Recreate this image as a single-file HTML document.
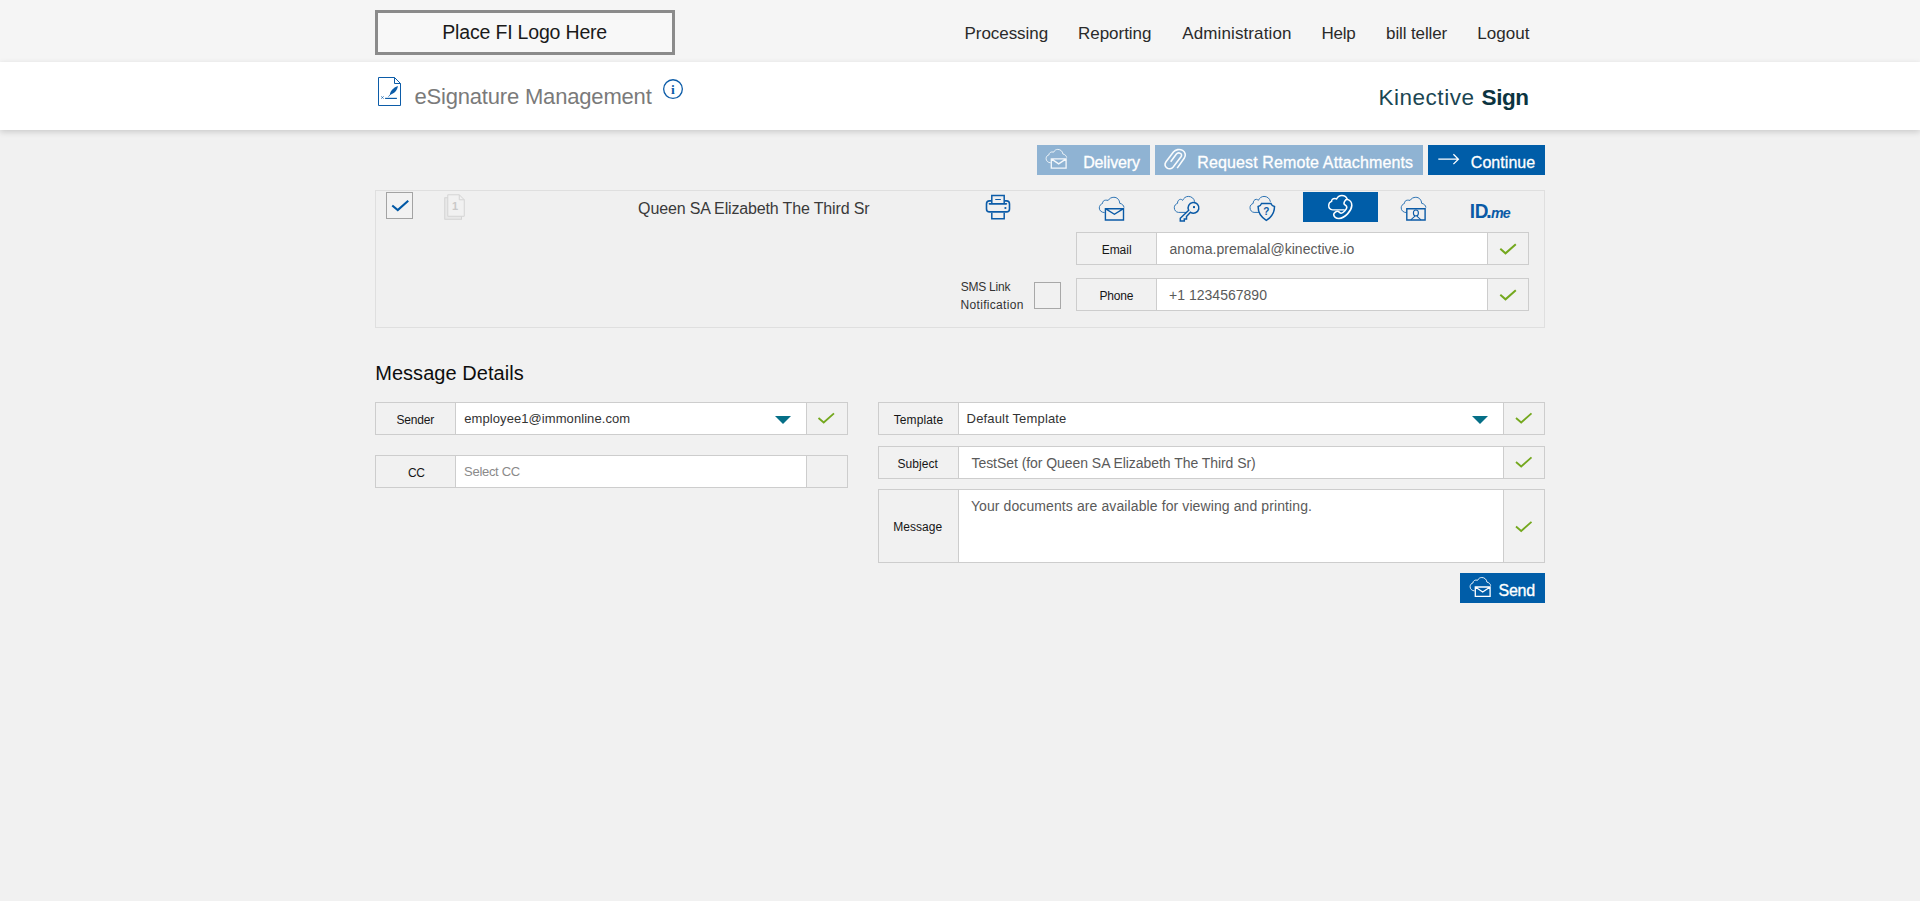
<!DOCTYPE html>
<html lang="en">
<head>
<meta charset="utf-8">
<title>eSignature Management</title>
<style>
html,body{margin:0;padding:0}
body{width:1920px;height:901px;overflow:hidden;background:#f1f1f1;position:relative;font-family:"Liberation Sans",sans-serif}
.abs{position:absolute;box-sizing:border-box}
.t{position:absolute;white-space:pre;font-family:"Liberation Sans",sans-serif}
#topbar{left:0;top:0;width:1920px;height:62px;background:#f5f5f5}
#logobox{left:375px;top:10px;width:300px;height:45px;border:3px solid #8b8b8b;background:#f8f8f8}
#band{left:0;top:62px;width:1920px;height:68px;background:#fff;box-shadow:0 2px 6px rgba(0,0,0,.16)}
.btn{height:30px;top:145px}
.row{border:1px solid #cdcdcd;background:#fff}
.lab{top:0;left:0;bottom:0;background:#f1f1f1;border-right:1px solid #cdcdcd}
.chk{top:0;right:0;bottom:0;background:#f1f1f1;border-left:1px solid #cdcdcd}
#panel{left:375px;top:190px;width:1170px;height:138px;border:1px solid #dfdfdf;background:#f0f0f0}
svg{position:absolute;left:0;top:0;overflow:visible}
</style>
</head>
<body>
<div class="abs" id="topbar"></div>
<div class="abs" id="logobox"></div>
<div class="abs" id="band"></div>

<!-- action buttons -->
<div class="abs btn" style="left:1037px;width:113px;background:#8fb3d3"></div>
<div class="abs btn" style="left:1155px;width:268px;background:#8fb3d3"></div>
<div class="abs btn" style="left:1428px;width:117px;background:#005da8"></div>

<!-- signer panel -->
<div class="abs" id="panel"></div>
<div class="abs" style="left:386px;top:192px;width:27px;height:27px;border:1px solid #a3a3a3;background:#f2f2f2"></div>
<div class="abs" style="left:1303px;top:192px;width:75px;height:30px;background:#005da8"></div>
<div class="abs" style="left:1034px;top:282px;width:27px;height:27px;border:1px solid #a8a8a8;background:#f1f1f1"></div>

<div class="abs row" style="left:1076px;top:232px;width:453px;height:33px"><div class="abs lab" style="width:80px"></div><div class="abs chk" style="width:41px"></div></div>
<div class="abs row" style="left:1076px;top:278px;width:453px;height:33px"><div class="abs lab" style="width:80px"></div><div class="abs chk" style="width:41px"></div></div>

<!-- message details -->
<div class="abs row" style="left:375px;top:402px;width:473px;height:33px"><div class="abs lab" style="width:80px"></div><div class="abs chk" style="width:41px"></div></div>
<div class="abs row" style="left:375px;top:455px;width:473px;height:33px"><div class="abs lab" style="width:80px"></div><div class="abs chk" style="width:41px"></div></div>
<div class="abs row" style="left:878px;top:402px;width:667px;height:33px"><div class="abs lab" style="width:80px"></div><div class="abs chk" style="width:41px"></div></div>
<div class="abs row" style="left:878px;top:446px;width:667px;height:33px"><div class="abs lab" style="width:80px"></div><div class="abs chk" style="width:41px"></div></div>
<div class="abs row" style="left:878px;top:489px;width:667px;height:74px"><div class="abs lab" style="width:80px"></div><div class="abs chk" style="width:41px"></div></div>

<div class="abs" style="left:1460px;top:573px;width:85px;height:30px;background:#005da8"></div>

<svg width="1920" height="901" viewBox="0 0 1920 901" fill="none" stroke-linejoin="miter">
<defs>
<g id="mailS">
<path d="M4.6 13.65 C1.8 13.45 .1 11.65 .1 9.45 C.1 7.45 1.4 6.05 3 5.65 C2.8 3.85 5.2 2.05 7.6 3.05 C8.4 1.25 10 .25 11.8 .25 C14.4 .25 16.6 2.05 16.9 4.85 C18.8 5.25 20.3 6.45 20.7 8.45" stroke-width=".9"/>
<path d="M5.3 9.75 H20.1 V19.05 H5.3 Z M5.3 9.75 L12.7 14.75 L20.1 9.75" stroke-width="1.3"/>
</g>
<path id="cloudA" d="M1104.6 212.6 C1101.4 212.4 1099.3 210.6 1099.3 207.9 C1099.3 205.8 1100.6 204.2 1102.5 203.5 C1102.6 201.6 1103.6 200.3 1105.4 200.2 C1106.4 200.1 1107.4 200.2 1108.2 200.4 C1109.4 198.4 1111.4 197.3 1113.9 197.3 C1117 197.3 1119.6 199.6 1119.7 203.3 C1122.2 203.8 1123.8 205.4 1124 207.6"/>
<path id="cloudB" d="M1186 212.4 H1178.4 C1176 212.2 1174.3 210.2 1174.3 207.7 C1174.3 205.6 1175.6 204 1177.5 203.4 C1177.4 201.2 1178.6 199.5 1180.6 199.3 C1181.4 199.3 1182 199.7 1182.6 200.4 C1183.8 198 1185.8 196.4 1188.3 196.4 C1191.6 196.4 1194.2 198.6 1194.7 201.8"/>
<path id="gchk" d="M13 16.05 L18.2 20.5 L28.5 11.4"/>
</defs>

<!-- title doc/sign icon -->
<g stroke="#0c5ca8" stroke-width="1">
<path d="M394.5 77.5 H378.5 V105.5 H400.5 V83.5 Z"/>
<path d="M394.5 77.5 V83.5 H400.5"/>
<path d="M385.1 98.4 H396.9" stroke-width="1.2"/>
<path d="M381.2 96.3 L383.7 98.7 M383.7 96.3 L381.2 98.7" stroke-width=".7"/>
<path d="M388.4 96.7 L391.6 93.2" stroke-width=".7"/>
<path d="M389.9 94.7 C390 91.6 393 87.8 397.9 86.1 C397.2 90.8 394.2 93.8 389.9 94.7 Z" fill="#0c5ca8" stroke="none"/>
</g>
<!-- info icon -->
<circle cx="673" cy="89.1" r="9.35" stroke="#0c5ca8" stroke-width="1.3"/>
<text x="673" y="94" text-anchor="middle" font-family="'Liberation Serif',serif" font-weight="bold" font-size="13.5" fill="#0c5ca8" stroke="none">i</text>

<!-- delivery / send icons -->
<use href="#mailS" transform="translate(1046 149.15)" stroke="#f4f8fb"/>
<use href="#mailS" transform="translate(1470 577.25)" stroke="#fff"/>
<!-- clip -->
<path d="M1177.2 168.1 L1184.2 158.3 C1186.2 155.4 1185.4 152 1182.6 150.4 C1179.6 148.8 1175.6 149.4 1173.4 152 L1166 161.8 C1164.4 164 1164.8 166.6 1166.8 167.8 C1168.8 169.2 1171.6 168.8 1173 167.2 L1181 156.8 C1182 155.4 1181.6 154 1180.4 153.4 C1179 152.6 1177.2 153 1176.2 154.2 L1170.7 161.75" stroke="#fafcfd" stroke-width="1.6"/>
<!-- arrow -->
<path d="M1438.3 159.2 H1458.2 M1453.4 154.3 L1458.4 159.2 L1453.4 164.1" stroke="#fff" stroke-width="1.3"/>

<!-- checkbox check -->
<path d="M392.25 205.5 L397.75 210 L408.25 200.75" stroke="#0058a5" stroke-width="2.1"/>
<!-- docs icon -->
<rect x="444.75" y="197.75" width="16.75" height="21.5" fill="#e8e8e8" stroke="#d4d4d4"/>
<path d="M447.75 194.75 H459.25 L464.25 199.75 V216.25 H447.75 Z" fill="#f1f1f1" stroke="#d4d4d4"/>
<path d="M459.25 194.75 V199.75 H464.25" stroke="#d4d4d4"/>
<text x="455" y="209.75" text-anchor="middle" font-family="'Liberation Sans',sans-serif" font-weight="bold" font-size="11" fill="#c9c9c9">1</text>

<!-- printer -->
<g stroke="#0c5ca8" stroke-width="1.6">
<path d="M991.8 200.9 H989.5 a3 3 0 0 0 -3 3 V208.9 a3 3 0 0 0 3 3 H1006.5 a3 3 0 0 0 3 -3 V203.9 a3 3 0 0 0 -3 -3 H1004.2"/>
<path d="M991.8 203.8 V195.4 H1004.2 V203.8" stroke-width="1.5"/>
<path d="M989.4 203.85 H1006.4" stroke-linecap="round"/>
<path d="M995.7 199.5 H1000.4" stroke-width="1.2" stroke-linecap="round"/>
<path d="M991.8 212.7 V218.7 H1004.2 V212.7" stroke-width="1.5"/>
<circle cx="1005.4" cy="208" r="1.1" fill="#0c5ca8" stroke="none"/>
</g>

<!-- cloud mail -->
<use href="#cloudA" stroke="#2e74b4" stroke-width="1"/>
<path d="M1105.4 208.7 H1123.5 V220 H1105.4 Z M1105.4 208.7 L1114.4 214.3 L1123.5 208.7" stroke="#0a5aa6" stroke-width="1.4"/>
<!-- cloud key -->
<use href="#cloudB" stroke="#2e74b4" stroke-width="1"/>
<path d="M1188.7 210.3 L1180.3 218.3 V221 H1184.3 V219 H1186.5 V216.6 L1190.5 212.3 A5.4 5.4 0 1 0 1188.7 210.3 Z" stroke="#0a5aa6" stroke-width="1.5"/>
<rect x="1193" y="206.1" width="2" height="2" fill="#0a5aa6"/>
<!-- cloud shield -->
<use href="#cloudB" transform="translate(75.7 0)" stroke="#2e74b4" stroke-width="1"/>
<path d="M1261.6 203.4 H1270.9 C1271.4 205 1272.6 206.2 1274.5 206.6 C1274.5 213 1271 217.6 1266.3 220.4 C1261.6 217.6 1258.1 213 1258.1 206.6 C1260 206.2 1261.1 205 1261.6 203.4 Z" fill="#f0f0f0" stroke="#0a5aa6" stroke-width="1.5"/>
<text x="1266.4" y="215.1" text-anchor="middle" font-family="'Liberation Sans',sans-serif" font-weight="bold" font-size="10" fill="#0a5aa6">?</text>
<!-- cloud phone (selected) -->
<path d="M1344.7 209.9 H1332.5 C1330.2 209.7 1328.7 207.8 1328.7 205.6 C1328.7 203.6 1329.9 202 1331.6 201.4 C1331.5 199.8 1332.8 198.5 1334.8 198.5 C1335.5 198.5 1336.1 198.7 1336.6 199 C1337.6 196.8 1339.6 195.5 1341.9 195.5 C1344.4 195.5 1346.4 196.8 1347.2 198.9" stroke="#fff" stroke-width="1.4"/>
<path d="M1347 199.3 C1349.9 199.9 1351.9 202.6 1351.8 205.5 C1351.5 211 1345 218 1339 218.5 C1336 218.6 1333.6 216.5 1333.7 214.5 C1333.8 213 1336 211.2 1337.6 211.2 C1338.8 211.2 1339.8 213.2 1341.2 213.2 C1343 213.2 1346.8 209.5 1346.8 207.2 C1346.8 205.5 1344 205 1344 203.4 C1344 201.8 1345.5 199.6 1347 199.3 Z" stroke="#fff" stroke-width="1.6"/>
<!-- cloud person -->
<use href="#cloudA" transform="translate(301.9 0)" stroke="#2e74b4" stroke-width="1"/>
<path d="M1406.8 208.7 H1425.1 V220 H1406.8 Z" stroke="#0a5aa6" stroke-width="1.4"/>
<ellipse cx="1415.9" cy="213" rx="2.5" ry="3" stroke="#0a5aa6" stroke-width="1.1"/>
<path d="M1410.9 220 C1412.2 218 1414.4 217.4 1414.9 215.6 M1420.9 220 C1419.6 218 1417.4 217.4 1416.9 215.6" stroke="#0a5aa6" stroke-width="1.1"/>

<!-- green checks -->
<g stroke="#74a81e" stroke-width="1.8">
<use href="#gchk" transform="translate(1487.3 232.8)" stroke-width="2"/>
<use href="#gchk" transform="translate(1487.3 278.8)" stroke-width="2"/>
<use href="#gchk" transform="translate(805.5 402)"/>
<use href="#gchk" transform="translate(1503 402)"/>
<use href="#gchk" transform="translate(1503 446)"/>
<use href="#gchk" transform="translate(1503 510.5)"/>
</g>
<!-- carets -->
<path d="M775 416 H791 L783 424 Z M1472 416 H1488 L1480 424 Z" fill="#056f87"/>
</svg>
<span class="t" id="idI" style="left:1469.8px;top:201.6px;font-size:19px;line-height:19px;font-weight:bold;color:#0a5aa6;letter-spacing:-.4px;transform:scaleY(1.08);transform-origin:0 16px">ID</span>
<span class="t" id="idDot" style="left:1485.9px;top:199.6px;font-size:21px;line-height:21px;font-weight:bold;color:#0a5aa6">.</span>
<span class="t" id="idMe" style="left:1491.1px;top:204.7px;font-size:15.5px;line-height:15.5px;font-weight:bold;font-style:italic;color:#0a5aa6;letter-spacing:-.9px;transform:scaleX(.92);transform-origin:0 13px">me</span>


<span class="t" id="n1" style="left:964.5px;top:24.9px;font-size:17px;line-height:17px;letter-spacing:-0.056px;color:#2a2a2a">Processing</span>
<span class="t" id="n2" style="left:1078.1px;top:24.9px;font-size:17px;line-height:17px;letter-spacing:-0.054px;color:#2a2a2a">Reporting</span>
<span class="t" id="n3" style="left:1182.3px;top:24.9px;font-size:17px;line-height:17px;letter-spacing:0.108px;color:#2a2a2a">Administration</span>
<span class="t" id="n4" style="left:1321.4px;top:24.9px;font-size:17px;line-height:17px;letter-spacing:-0.230px;color:#2a2a2a">Help</span>
<span class="t" id="n5" style="left:1386.1px;top:24.9px;font-size:17px;line-height:17px;letter-spacing:-0.119px;color:#2a2a2a">bill teller</span>
<span class="t" id="n6" style="left:1477.3px;top:24.9px;font-size:17px;line-height:17px;letter-spacing:0.034px;color:#2a2a2a">Logout</span>
<span class="t" id="logo" style="left:442.3px;top:22.7px;font-size:19.5px;line-height:19.5px;letter-spacing:-0.182px;color:#1a1a1a">Place FI Logo Here</span>
<span class="t" id="title" style="left:414.4px;top:85.7px;font-size:22px;line-height:22px;letter-spacing:-0.179px;color:#7a7a7a">eSignature Management</span>
<span class="t" id="kin" style="left:1378.4px;top:86.9px;font-size:22.5px;line-height:22.5px;letter-spacing:0.534px;color:#1b4652">Kinective</span>
<span class="t" id="sign" style="left:1481.6px;top:86.9px;font-size:22.5px;line-height:22.5px;letter-spacing:-0.457px;color:#0b3440;font-weight:bold">Sign</span>
<span class="t" id="b1" style="left:1083.2px;top:154.8px;font-size:16px;line-height:16px;letter-spacing:-0.136px;color:#fff;-webkit-text-stroke:.3px #fff">Delivery</span>
<span class="t" id="b2" style="left:1197.2px;top:154.8px;font-size:16px;line-height:16px;letter-spacing:0.134px;color:#fff;-webkit-text-stroke:.3px #fff">Request Remote Attachments</span>
<span class="t" id="b3" style="left:1470.8px;top:154.8px;font-size:16px;line-height:16px;letter-spacing:0.046px;color:#fff;-webkit-text-stroke:.3px #fff">Continue</span>
<span class="t" id="name" style="left:638.1px;top:200.8px;font-size:16px;line-height:16px;letter-spacing:-0.152px;color:#3a3a3a">Queen SA Elizabeth The Third Sr</span>
<span class="t" id="lemail" style="left:1101.7px;top:243.9px;font-size:12px;line-height:12px;letter-spacing:-0.037px;color:#161616">Email</span>
<span class="t" id="lphone" style="left:1099.6px;top:290.0px;font-size:12px;line-height:12px;letter-spacing:-0.240px;color:#161616">Phone</span>
<span class="t" id="vemail" style="left:1169.5px;top:242.0px;font-size:14px;line-height:14px;letter-spacing:0.036px;color:#5a5a5a">anoma.premalal@kinective.io</span>
<span class="t" id="vphone" style="left:1169.1px;top:287.6px;font-size:14px;line-height:14px;letter-spacing:0.010px;color:#5a5a5a">+1 1234567890</span>
<span class="t" id="sms1" style="left:960.7px;top:281.0px;font-size:12px;line-height:12px;letter-spacing:-0.231px;color:#333">SMS Link</span>
<span class="t" id="sms2" style="left:960.6px;top:299.1px;font-size:12px;line-height:12px;letter-spacing:0.305px;color:#333">Notification</span>
<span class="t" id="md" style="left:375.2px;top:362.9px;font-size:20px;line-height:20px;letter-spacing:0.043px;color:#0d0d0d">Message Details</span>
<span class="t" id="lsender" style="left:396.6px;top:414.0px;font-size:12px;line-height:12px;letter-spacing:-0.226px;color:#161616">Sender</span>
<span class="t" id="lcc" style="left:408.0px;top:466.5px;font-size:12px;line-height:12px;letter-spacing:-0.400px;color:#161616">CC</span>
<span class="t" id="vsender" style="left:464.3px;top:411.9px;font-size:13px;line-height:13px;letter-spacing:0.073px;color:#333">employee1@immonline.com</span>
<span class="t" id="vcc" style="left:464.1px;top:464.9px;font-size:13px;line-height:13px;letter-spacing:-0.298px;color:#8a8a8a">Select CC</span>
<span class="t" id="ltemplate" style="left:893.7px;top:414.0px;font-size:12px;line-height:12px;letter-spacing:0.097px;color:#161616">Template</span>
<span class="t" id="lsubject" style="left:897.4px;top:457.9px;font-size:12px;line-height:12px;letter-spacing:0.070px;color:#161616">Subject</span>
<span class="t" id="lmessage" style="left:893.3px;top:521.2px;font-size:12px;line-height:12px;letter-spacing:0.037px;color:#161616">Message</span>
<span class="t" id="vtemplate" style="left:966.6px;top:412.0px;font-size:13px;line-height:13px;letter-spacing:0.161px;color:#333">Default Template</span>
<span class="t" id="vsubject" style="left:971.5px;top:455.9px;font-size:14px;line-height:14px;letter-spacing:-0.055px;color:#5a5a5a">TestSet (for Queen SA Elizabeth The Third Sr)</span>
<span class="t" id="vmessage" style="left:970.9px;top:498.9px;font-size:14px;line-height:14px;letter-spacing:0.101px;color:#5a5a5a">Your documents are available for viewing and printing.</span>
<span class="t" id="send" style="left:1498.5px;top:582.8px;font-size:16px;line-height:16px;letter-spacing:-0.250px;color:#fff;-webkit-text-stroke:.35px #fff">Send</span>
</body>
</html>
